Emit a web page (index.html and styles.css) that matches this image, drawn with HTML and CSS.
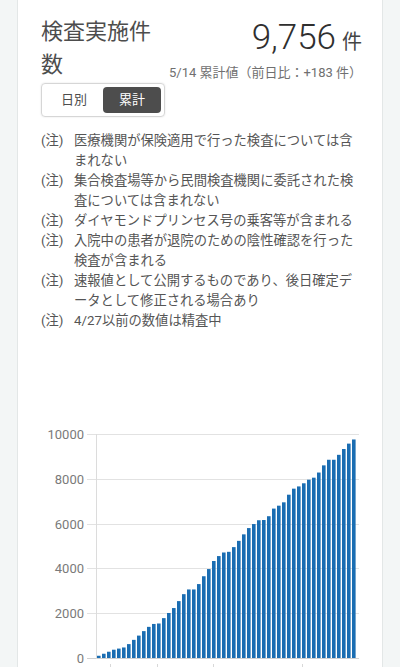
FILE: index.html
```html
<!DOCTYPE html>
<html lang="ja">
<head>
<meta charset="utf-8">
<title>検査実施件数</title>
<link rel="stylesheet" href="styles.css">
</head>
<body>
<div class="card">
  <div class="header">
    <h3 class="title">検査実施件数</h3>
    <div class="summary">
      <div class="total"><span class="num">9,756</span><span class="unit">件</span></div>
      <div class="sub">5/14 累計値（前日比：+183 件）</div>
    </div>
  </div>
  <div class="toggle">
    <span class="tbtn">日別</span>
    <span class="tbtn active">累計</span>
  </div>
  <ul class="notes">
    <li><span class="lbl">(注)</span><span class="txt">医療機関が保険適用で行った検査については含まれない</span></li>
    <li><span class="lbl">(注)</span><span class="txt">集合検査場等から民間検査機関に委託された検査については含まれない</span></li>
    <li><span class="lbl">(注)</span><span class="txt">ダイヤモンドプリンセス号の乗客等が含まれる</span></li>
    <li><span class="lbl">(注)</span><span class="txt">入院中の患者が退院のための陰性確認を行った検査が含まれる</span></li>
    <li><span class="lbl">(注)</span><span class="txt">速報値として公開するものであり、後日確定データとして修正される場合あり</span></li>
    <li><span class="lbl">(注)</span><span class="txt">4/27以前の数値は精査中</span></li>
  </ul>
  <svg class="chart" width="321" height="250" viewBox="0 0 321 250">
    <g class="grid" stroke="#e2e2e2" stroke-width="1">
      <line x1="46" y1="13.5" x2="318" y2="13.5"/>
      <line x1="46" y1="58.5" x2="318" y2="58.5"/>
      <line x1="46" y1="103.5" x2="318" y2="103.5"/>
      <line x1="46" y1="147.5" x2="318" y2="147.5"/>
      <line x1="46" y1="192.5" x2="318" y2="192.5"/>
      <line x1="46" y1="237.5" x2="318" y2="237.5" stroke="#d0d0d0"/>
      <line x1="55.5" y1="13" x2="55.5" y2="238" stroke="#dcdcdc"/>
      <line x1="69.5" y1="243" x2="69.5" y2="250" stroke="#d8d8d8"/>
      <line x1="116.5" y1="243" x2="116.5" y2="250" stroke="#d8d8d8"/>
      <line x1="172.5" y1="243" x2="172.5" y2="250" stroke="#d8d8d8"/>
      <line x1="261.5" y1="243" x2="261.5" y2="250" stroke="#d8d8d8"/>
    </g>
    <g class="ylabels" text-anchor="end">
      <text x="43" y="18">10000</text>
      <text x="43" y="63">8000</text>
      <text x="43" y="108">6000</text>
      <text x="43" y="152">4000</text>
      <text x="43" y="197">2000</text>
      <text x="43" y="242">0</text>
    </g>
    <g class="bars" fill="#1a6db2" transform="translate(0,237) scale(1,-1)">
      <rect x="56" y="0" width="3.6" height="2.24"/>
      <rect x="61" y="0" width="3.6" height="4.26"/>
      <rect x="66" y="0" width="3.6" height="6.27"/>
      <rect x="71" y="0" width="3.6" height="8.29"/>
      <rect x="76" y="0" width="3.6" height="9.41"/>
      <rect x="81" y="0" width="3.6" height="10.53"/>
      <rect x="86" y="0" width="3.6" height="13.89"/>
      <rect x="91" y="0" width="3.6" height="18.14"/>
      <rect x="96" y="0" width="3.6" height="22.4"/>
      <rect x="101" y="0" width="3.6" height="26.88"/>
      <rect x="106" y="0" width="3.6" height="31.14"/>
      <rect x="111" y="0" width="3.6" height="34.05"/>
      <rect x="116" y="0" width="3.6" height="34.5"/>
      <rect x="121" y="0" width="3.6" height="39.87"/>
      <rect x="126" y="0" width="3.6" height="45.02"/>
      <rect x="131" y="0" width="3.6" height="49.95"/>
      <rect x="136" y="0" width="3.6" height="56.9"/>
      <rect x="141" y="0" width="3.6" height="63.84"/>
      <rect x="146" y="0" width="3.6" height="68.54"/>
      <rect x="151" y="0" width="3.6" height="68.54"/>
      <rect x="156" y="0" width="3.6" height="73.92"/>
      <rect x="161" y="0" width="3.6" height="81.76"/>
      <rect x="166" y="0" width="3.6" height="88.93"/>
      <rect x="171" y="0" width="3.6" height="96.99"/>
      <rect x="176" y="0" width="3.6" height="101.92"/>
      <rect x="181" y="0" width="3.6" height="105.5"/>
      <rect x="186" y="0" width="3.6" height="106.18"/>
      <rect x="191" y="0" width="3.6" height="110.88"/>
      <rect x="196" y="0" width="3.6" height="117.15"/>
      <rect x="201" y="0" width="3.6" height="123.65"/>
      <rect x="206" y="0" width="3.6" height="129.92"/>
      <rect x="211" y="0" width="3.6" height="133.95"/>
      <rect x="216" y="0" width="3.6" height="137.76"/>
      <rect x="221" y="0" width="3.6" height="137.98"/>
      <rect x="226" y="0" width="3.6" height="141.79"/>
      <rect x="231" y="0" width="3.6" height="149.41"/>
      <rect x="236" y="0" width="3.6" height="152.32"/>
      <rect x="241" y="0" width="3.6" height="155.68"/>
      <rect x="246" y="0" width="3.6" height="163.3"/>
      <rect x="251" y="0" width="3.6" height="169.34"/>
      <rect x="256" y="0" width="3.6" height="171.58"/>
      <rect x="261" y="0" width="3.6" height="174.72"/>
      <rect x="266" y="0" width="3.6" height="178.3"/>
      <rect x="271" y="0" width="3.6" height="180.32"/>
      <rect x="276" y="0" width="3.6" height="185.47"/>
      <rect x="281" y="0" width="3.6" height="192.64"/>
      <rect x="286" y="0" width="3.6" height="198.24"/>
      <rect x="291" y="0" width="3.6" height="198.24"/>
      <rect x="296" y="0" width="3.6" height="203.17"/>
      <rect x="301" y="0" width="3.6" height="208.99"/>
      <rect x="306" y="0" width="3.6" height="214.37"/>
      <rect x="311" y="0" width="3.6" height="218.53"/>
    </g>
  </svg>
</div>
</body>
</html>
```
FILE: styles.css
```css
html, body {
  margin: 0;
  padding: 0;
}
body {
  background: #f3f6f6;
  font-family: Roboto, "Noto Sans CJK JP", sans-serif;
  color: #333;
}
.card {
  margin: 0 17px;
  background: #fff;
  border-left: 1px solid #e3e7e7;
  border-right: 1px solid #e3e7e7;
  padding: 15px 20px 20px 23px;
  min-height: 700px;
}
.header {
  display: flex;
  justify-content: space-between;
  align-items: flex-start;
  height: 68px;
}
.title {
  margin: 0;
  width: 120px;
  font-size: 22px;
  line-height: 33px;
  font-weight: 400;
  color: #4d4d4d;
}
.summary {
  display: flex;
  flex-direction: column;
  align-items: flex-end;
  padding-top: 3px;
}
.total {
  height: 40px;
  line-height: 40px;
  font-size: 35px;
  color: #333;
  white-space: nowrap;
}
.num {
  font-size: 35px;
  font-weight: 300;
  color: #2f2f2f;
}
.unit {
  font-size: 20px;
  line-height: 1;
  margin-left: 6px;
  color: #444;
}
.sub {
  margin-top: 5px;
  height: 20px;
  font-size: 13px;
  line-height: 20px;
  color: #707070;
  white-space: nowrap;
}
.toggle {
  display: inline-flex;
  margin-top: 0;
  padding: 3px;
  border: 1px solid #d6d6d6;
  border-radius: 4px;
  box-shadow: 0 0 2px rgba(0, 0, 0, 0.12);
}
.tbtn {
  width: 58px;
  height: 26px;
  line-height: 26px;
  text-align: center;
  font-size: 13px;
  color: #4d4d4d;
  border-radius: 4px;
}
.tbtn.active {
  background: #4d4d4d;
  color: #fff;
}
.notes {
  list-style: none;
  margin: 14px 0 0;
  padding: 0;
  font-size: 13.3px;
  line-height: 20px;
  color: #555;
}
.notes li {
  display: flex;
}
.lbl {
  flex: 0 0 33px;
}
.txt {
  width: 288px;
}
.chart {
  display: block;
  margin-top: 90px;
  overflow: visible;
}
.ylabels {
  font-family: Roboto, sans-serif;
  font-size: 13px;
  fill: #7a7a7a;
}
```
